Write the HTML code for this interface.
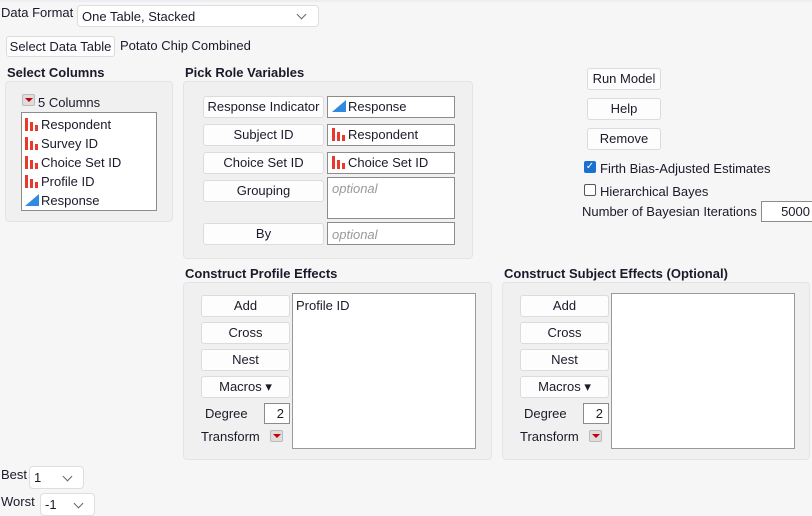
<!DOCTYPE html>
<html><head><style>
body{margin:0;width:812px;height:516px;background:#f6f6f6;font-family:"Liberation Sans",sans-serif;font-size:13px;color:#1a1a2a;position:relative;overflow:hidden}
div{position:absolute;box-sizing:border-box}
.t{white-space:nowrap;line-height:15px}
.b{font-weight:bold}
.btn{background:#fdfdfd;border:1px solid #dcdcdc;border-radius:3px;text-align:center;line-height:20px;white-space:nowrap}
.pan{background:#f0f0f0;border:1px solid #e4e4e4;border-radius:4px}
.fld{background:#fff;border:1px solid #8c8c8c;white-space:nowrap;padding-left:4px;line-height:20px}
.opt{color:#999;font-style:italic}
.dd{background:#fff;border:1px solid #dedede;border-radius:4px;padding-left:4px;line-height:21px}
.tog{width:13px;height:12px;background:#ddd;border:1px solid #bbb;border-radius:2px}
.tog:after{content:"";position:absolute;left:2px;top:3px;border-left:4px solid transparent;border-right:4px solid transparent;border-top:4px solid #c00}
.chev{position:absolute;width:6px;height:6px;border-right:1.3px solid #666;border-bottom:1.3px solid #666;transform:rotate(45deg)}
.bar{display:inline-block;position:relative;width:14px;height:13px;vertical-align:-2px;margin-right:2px}
.bar i{position:absolute;bottom:0;width:3px;background:#e8392e}
.tri{display:inline-block;position:relative;width:0;height:0;border-left:14px solid transparent;border-bottom:12px solid #2f8ae0;vertical-align:-1px;margin-right:2px}
</style></head><body>
<div style="left:0;top:0;width:812px;height:2px;background:#eceef2"></div>
<div class="t" style="left:1px;top:5px">Data Format</div>
<div class="dd" style="left:77px;top:5px;width:242px;height:22px">One Table, Stacked<span class="chev" style="left:220px;top:5px"></span></div>
<div class="btn" style="left:6px;top:36px;width:109px;height:21px">Select Data Table</div>
<div class="t" style="left:120px;top:38px">Potato Chip Combined</div>

<div class="t b" style="left:7px;top:65px">Select Columns</div>
<div class="pan" style="left:5px;top:81px;width:168px;height:141px"></div>
<div class="tog" style="left:22px;top:94px"></div>
<div class="t" style="left:38px;top:95px">5 Columns</div>
<div style="left:21px;top:112px;width:136px;height:99px;background:#fff;border:1px solid #8c8c8c"></div>
<div class="t" style="left:25px;top:117px"><span class="bar"><i style="left:0;height:13px"></i><i style="left:5px;height:9px"></i><i style="left:10px;height:6px"></i></span>Respondent</div>
<div class="t" style="left:25px;top:136px"><span class="bar"><i style="left:0;height:13px"></i><i style="left:5px;height:9px"></i><i style="left:10px;height:6px"></i></span>Survey ID</div>
<div class="t" style="left:25px;top:155px"><span class="bar"><i style="left:0;height:13px"></i><i style="left:5px;height:9px"></i><i style="left:10px;height:6px"></i></span>Choice Set ID</div>
<div class="t" style="left:25px;top:174px"><span class="bar"><i style="left:0;height:13px"></i><i style="left:5px;height:9px"></i><i style="left:10px;height:6px"></i></span>Profile ID</div>
<div class="t" style="left:25px;top:193px"><span class="tri"></span>Response</div>

<div class="t b" style="left:185px;top:65px">Pick Role Variables</div>
<div class="pan" style="left:183px;top:81px;width:290px;height:178px"></div>
<div class="btn" style="left:203px;top:96px;width:121px;height:22px">Response Indicator</div>
<div class="btn" style="left:203px;top:124px;width:121px;height:22px">Subject ID</div>
<div class="btn" style="left:203px;top:152px;width:121px;height:22px">Choice Set ID</div>
<div class="btn" style="left:203px;top:180px;width:121px;height:22px">Grouping</div>
<div class="btn" style="left:203px;top:223px;width:121px;height:22px">By</div>
<div class="fld" style="left:327px;top:96px;width:128px;height:22px"><span class="tri"></span>Response</div>
<div class="fld" style="left:327px;top:124px;width:128px;height:22px"><span class="bar"><i style="left:0;height:13px"></i><i style="left:5px;height:9px"></i><i style="left:10px;height:6px"></i></span>Respondent</div>
<div class="fld" style="left:327px;top:152px;width:128px;height:22px"><span class="bar"><i style="left:0;height:13px"></i><i style="left:5px;height:9px"></i><i style="left:10px;height:6px"></i></span>Choice Set ID</div>
<div class="fld opt" style="left:327px;top:177px;width:128px;height:42px;line-height:22px">optional</div>
<div class="fld opt" style="left:327px;top:222px;width:128px;height:23px;line-height:23px">optional</div>

<div class="btn" style="left:587px;top:68px;width:74px;height:22px">Run Model</div>
<div class="btn" style="left:587px;top:98px;width:74px;height:22px">Help</div>
<div class="btn" style="left:587px;top:128px;width:74px;height:22px">Remove</div>
<div style="left:584px;top:161px;width:12px;height:12px;background:#1a6fd0;border-radius:2px;color:#fff;font-size:10px;line-height:12px;text-align:center">✓</div>
<div class="t" style="left:600px;top:161px">Firth Bias-Adjusted Estimates</div>
<div style="left:584px;top:184px;width:12px;height:12px;background:#fff;border:1px solid #555;border-radius:2px"></div>
<div class="t" style="left:600px;top:184px">Hierarchical Bayes</div>
<div class="t" style="left:582px;top:204px">Number of Bayesian Iterations</div>
<div class="fld" style="left:761px;top:201px;width:60px;height:21px;text-align:right;padding-right:10px">5000</div>

<div class="t b" style="left:185px;top:266px">Construct Profile Effects</div>
<div class="pan" style="left:183px;top:282px;width:309px;height:178px"></div>
<div class="btn" style="left:201px;top:295px;width:89px;height:22px">Add</div>
<div class="btn" style="left:201px;top:322px;width:89px;height:22px">Cross</div>
<div class="btn" style="left:201px;top:349px;width:89px;height:22px">Nest</div>
<div class="btn" style="left:201px;top:376px;width:89px;height:22px">Macros ▾</div>
<div class="t" style="left:205px;top:406px">Degree</div>
<div class="fld" style="left:264px;top:403px;width:26px;height:21px;text-align:right;padding-right:5px">2</div>
<div class="t" style="left:201px;top:429px">Transform</div>
<div class="tog" style="left:270px;top:430px"></div>
<div style="left:292px;top:293px;width:184px;height:156px;background:#fff;border:1px solid #999"></div>
<div class="t" style="left:296px;top:298px">Profile ID</div>

<div class="t b" style="left:504px;top:266px">Construct Subject Effects (Optional)</div>
<div class="pan" style="left:502px;top:282px;width:308px;height:178px"></div>
<div class="btn" style="left:520px;top:295px;width:89px;height:22px">Add</div>
<div class="btn" style="left:520px;top:322px;width:89px;height:22px">Cross</div>
<div class="btn" style="left:520px;top:349px;width:89px;height:22px">Nest</div>
<div class="btn" style="left:520px;top:376px;width:89px;height:22px">Macros ▾</div>
<div class="t" style="left:524px;top:406px">Degree</div>
<div class="fld" style="left:583px;top:403px;width:26px;height:21px;text-align:right;padding-right:5px">2</div>
<div class="t" style="left:520px;top:429px">Transform</div>
<div class="tog" style="left:589px;top:430px"></div>
<div style="left:611px;top:293px;width:184px;height:156px;background:#fff;border:1px solid #999"></div>

<div class="t" style="left:1px;top:467px">Best</div>
<div class="dd" style="left:29px;top:466px;width:55px;height:23px">1<span class="chev" style="left:34px;top:6px"></span></div>
<div class="t" style="left:1px;top:494px">Worst</div>
<div class="dd" style="left:40px;top:493px;width:55px;height:23px">-1<span class="chev" style="left:34px;top:6px"></span></div>
</body></html>
